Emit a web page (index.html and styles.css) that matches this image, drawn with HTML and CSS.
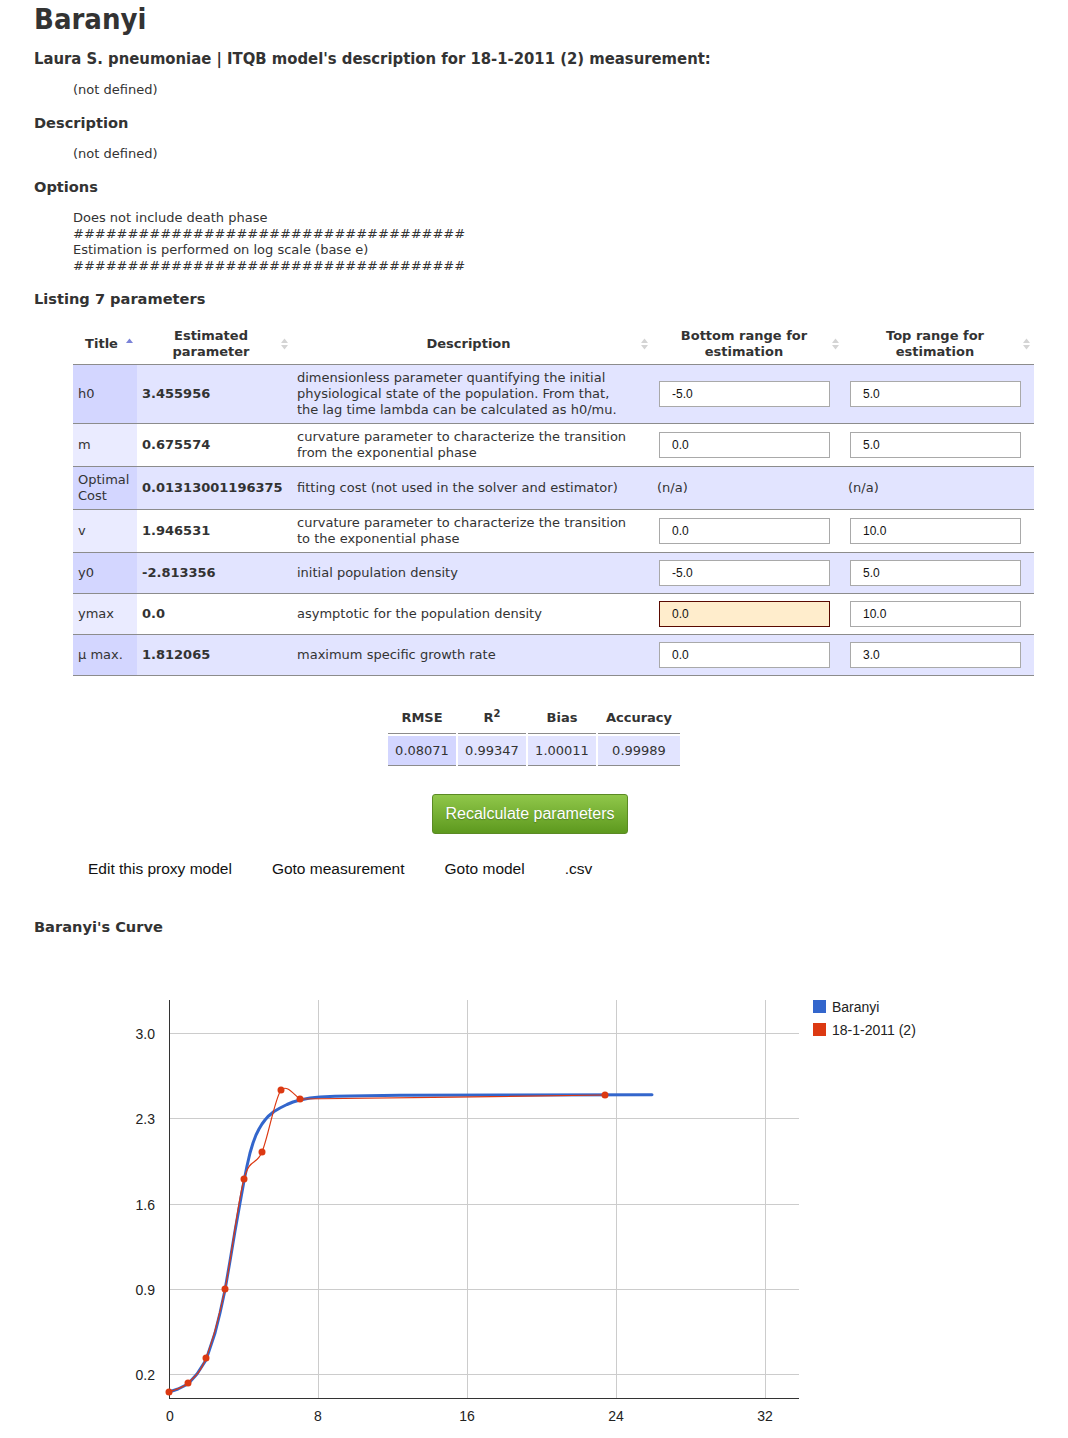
FILE: index.html
```html
<!DOCTYPE html>
<html>
<head>
<meta charset="utf-8">
<title>Baranyi</title>
<link rel="stylesheet" href="styles.css">
</head>
<body>
<div class="page">
  <h1 class="title">Baranyi</h1>
  <h2 class="subtitle">Laura S. pneumoniae | ITQB model's description for 18-1-2011 (2) measurement:</h2>
  <p class="indent">(not defined)</p>
  <h3 class="section">Description</h3>
  <p class="indent">(not defined)</p>
  <h3 class="section">Options</h3>
  <p class="indent">Does not include death phase<br>####################################<br>Estimation is performed on log scale (base e)<br>####################################</p>
  <h3 class="section">Listing 7 parameters</h3>

  <table class="params">
    <colgroup>
      <col class="c-title"><col class="c-est"><col class="c-desc"><col class="c-bot"><col class="c-top">
    </colgroup>
    <thead>
      <tr>
        <th><div class="th-in"><span class="th-label">Title</span><svg class="sort" width="7" height="12" viewBox="0 0 7 12"><path d="M0 5 L3.5 0.5 L7 5 Z" fill="#7b83d8"/></svg></div></th>
        <th><div class="th-in"><span class="th-label">Estimated<br>parameter</span><svg class="sort" width="7" height="12" viewBox="0 0 7 12"><path d="M0 5 L3.5 0.5 L7 5 Z M0 7 L7 7 L3.5 11.5 Z" fill="#d4d4d4"/></svg></div></th>
        <th><div class="th-in"><span class="th-label">Description</span><svg class="sort" width="7" height="12" viewBox="0 0 7 12"><path d="M0 5 L3.5 0.5 L7 5 Z M0 7 L7 7 L3.5 11.5 Z" fill="#d4d4d4"/></svg></div></th>
        <th><div class="th-in"><span class="th-label">Bottom range for<br>estimation</span><svg class="sort" width="7" height="12" viewBox="0 0 7 12"><path d="M0 5 L3.5 0.5 L7 5 Z M0 7 L7 7 L3.5 11.5 Z" fill="#d4d4d4"/></svg></div></th>
        <th><div class="th-in"><span class="th-label">Top range for<br>estimation</span><svg class="sort" width="7" height="12" viewBox="0 0 7 12"><path d="M0 5 L3.5 0.5 L7 5 Z M0 7 L7 7 L3.5 11.5 Z" fill="#d4d4d4"/></svg></div></th>
      </tr>
    </thead>
    <tbody>
      <tr class="odd">
        <td class="key">h0</td>
        <td class="val">3.455956</td>
        <td class="desc">dimensionless parameter quantifying the initial physiological state of the population. From that, the lag time lambda can be calculated as h0/mu.</td>
        <td><input class="rng" type="text" value="-5.0"></td>
        <td><input class="rng" type="text" value="5.0"></td>
      </tr>
      <tr class="even">
        <td class="key">m</td>
        <td class="val">0.675574</td>
        <td class="desc">curvature parameter to characterize the transition from the exponential phase</td>
        <td><input class="rng" type="text" value="0.0"></td>
        <td><input class="rng" type="text" value="5.0"></td>
      </tr>
      <tr class="odd">
        <td class="key">Optimal Cost</td>
        <td class="val">0.01313001196375</td>
        <td class="desc">fitting cost (not used in the solver and estimator)</td>
        <td>(n/a)</td>
        <td>(n/a)</td>
      </tr>
      <tr class="even">
        <td class="key">v</td>
        <td class="val">1.946531</td>
        <td class="desc">curvature parameter to characterize the transition to the exponential phase</td>
        <td><input class="rng" type="text" value="0.0"></td>
        <td><input class="rng" type="text" value="10.0"></td>
      </tr>
      <tr class="odd">
        <td class="key">y0</td>
        <td class="val">-2.813356</td>
        <td class="desc">initial population density</td>
        <td><input class="rng" type="text" value="-5.0"></td>
        <td><input class="rng" type="text" value="5.0"></td>
      </tr>
      <tr class="even">
        <td class="key">ymax</td>
        <td class="val">0.0</td>
        <td class="desc">asymptotic for the population density</td>
        <td><input class="rng rng-warn" type="text" value="0.0"></td>
        <td><input class="rng" type="text" value="10.0"></td>
      </tr>
      <tr class="odd">
        <td class="key">μ max.</td>
        <td class="val">1.812065</td>
        <td class="desc">maximum specific growth rate</td>
        <td><input class="rng" type="text" value="0.0"></td>
        <td><input class="rng" type="text" value="3.0"></td>
      </tr>
    </tbody>
  </table>

  <table class="stats">
    <thead>
      <tr><th class="s1">RMSE</th><th class="s2">R<sup>2</sup></th><th class="s3">Bias</th><th class="s4">Accuracy</th></tr>
    </thead>
    <tbody>
      <tr><td class="key">0.08071</td><td>0.99347</td><td>1.00011</td><td>0.99989</td></tr>
    </tbody>
  </table>

  <div class="btn-row"><button class="btn" type="button">Recalculate parameters</button></div>

  <div class="links">
    <a href="#">Edit this proxy model</a>
    <a href="#">Goto measurement</a>
    <a href="#">Goto model</a>
    <a href="#">.csv</a>
  </div>

  <h3 class="section curve-title">Baranyi's Curve</h3>

  <svg class="chart" width="1034" height="478" viewBox="0 0 1034 478">
    <g transform="translate(-34,-960)">
      <g stroke="#cccccc" stroke-width="1">
        <line x1="169" y1="1033.5" x2="799" y2="1033.5"/>
        <line x1="169" y1="1118.5" x2="799" y2="1118.5"/>
        <line x1="169" y1="1204.5" x2="799" y2="1204.5"/>
        <line x1="169" y1="1289.5" x2="799" y2="1289.5"/>
        <line x1="169" y1="1374.5" x2="799" y2="1374.5"/>
        <line x1="318.5" y1="1000" x2="318.5" y2="1398"/>
        <line x1="467.5" y1="1000" x2="467.5" y2="1398"/>
        <line x1="616.5" y1="1000" x2="616.5" y2="1398"/>
        <line x1="765.5" y1="1000" x2="765.5" y2="1398"/>
      </g>
      <g stroke="#333333" stroke-width="1">
        <line x1="169.5" y1="1000" x2="169.5" y2="1399"/>
        <line x1="169" y1="1398.5" x2="799" y2="1398.5"/>
      </g>
      <g class="axis-label" text-anchor="end">
        <text x="155" y="1039">3.0</text>
        <text x="155" y="1124">2.3</text>
        <text x="155" y="1210">1.6</text>
        <text x="155" y="1295">0.9</text>
        <text x="155" y="1380">0.2</text>
      </g>
      <g class="axis-label" text-anchor="middle">
        <text x="170" y="1421">0</text>
        <text x="318" y="1421">8</text>
        <text x="467" y="1421">16</text>
        <text x="616" y="1421">24</text>
        <text x="765" y="1421">32</text>
      </g>
      <polyline points="169,1392 178,1389 188,1384 197,1374 206,1360 215,1333 220,1313 225,1290 230,1261 235,1231 240,1203 244,1181 247,1166 250,1153 253,1143 256,1135 259,1129 262,1124 265,1120 268,1116.5 271,1114 274,1111.5 280,1108 287,1104.5 293,1102 300,1100 310,1098 320,1097 335,1096.3 350,1095.9 400,1095.3 500,1095 652,1094.8" fill="none" stroke="#3366cc" stroke-width="3" stroke-linecap="round" stroke-linejoin="round"/>
      <path d="M169 1392 C172.2 1390.5 181.8 1388.7 188 1383 C194.2 1377.3 199.8 1373.7 206 1358 C212.2 1342.3 218.7 1318.8 225 1289 C231.3 1259.2 237.8 1201.8 244 1179 C250.2 1156.2 255.8 1166.8 262 1152 C268.2 1137.2 274.7 1098.8 281 1090 C287 1084 294 1095 300 1099 C330 1099 560 1095.5 605 1095" fill="none" stroke="#dc3912" stroke-width="1.2"/>
      <g fill="#dc3912">
        <circle cx="169" cy="1392" r="3.5"/>
        <circle cx="188" cy="1383" r="3.5"/>
        <circle cx="206" cy="1358" r="3.5"/>
        <circle cx="225" cy="1289" r="3.5"/>
        <circle cx="244" cy="1179" r="3.5"/>
        <circle cx="262" cy="1152" r="3.5"/>
        <circle cx="281" cy="1090" r="3.5"/>
        <circle cx="300" cy="1099" r="3.5"/>
        <circle cx="605" cy="1095" r="3.5"/>
      </g>
      <rect x="813" y="1000" width="13" height="13" fill="#3366cc"/>
      <text class="legend" x="832" y="1012">Baranyi</text>
      <rect x="813" y="1023" width="13" height="13" fill="#dc3912"/>
      <text class="legend" x="832" y="1035">18-1-2011 (2)</text>
    </g>
  </svg>
</div>
</body>
</html>
```

FILE: styles.css
```css
html, body {
  margin: 0;
  padding: 0;
  background: #ffffff;
}

body {
  font-family: "DejaVu Sans", Verdana, sans-serif;
  font-size: 13px;
  line-height: 16px;
  color: #333333;
}

.page {
  padding: 0 34px;
}

.title {
  margin: 2px 0 0;
  font-family: "DejaVu Sans Condensed", "DejaVu Sans", sans-serif;
  font-weight: bold;
  font-size: 29px;
  line-height: 34px;
  color: #333333;
}

.subtitle {
  margin: 13px 0 0;
  font-family: "DejaVu Sans Condensed", "DejaVu Sans", sans-serif;
  font-weight: bold;
  font-size: 16.5px;
  line-height: 20px;
  color: #333333;
}

.section {
  margin: 15px 0 0;
  font-weight: bold;
  font-size: 14.6px;
  line-height: 20px;
  color: #333333;
}

.indent {
  margin: 13px 0 0 39px;
}

/* parameters table */
.params {
  margin: 15px 0 0 39px;
  width: 961px;
  table-layout: fixed;
  border-collapse: collapse;
}

.c-title { width: 64px; }
.c-est { width: 155px; }
.c-desc { width: 360px; }
.c-bot { width: 191px; }
.c-top { width: 191px; }

.params th {
  padding: 4px 4px 4px 6px;
  border-bottom: 1px solid #8c8c8c;
  font-weight: bold;
  color: #333333;
}

.th-in {
  display: flex;
  align-items: center;
}

.th-label {
  flex: 1;
  text-align: center;
}

.sort {
  flex: none;
  margin-left: 2px;
}

.params td {
  padding: 5px;
  border-bottom: 1px solid #8c8c8c;
  vertical-align: middle;
}

.params td.desc {
  padding-right: 22px;
}

.params tr.odd td { background: #e2e4ff; }
.params tr.odd td.key { background: #d3d6ff; }
.params tr.even td { background: #ffffff; }
.params tr.even td.key { background: #eaebff; }

.params td.val {
  font-weight: bold;
}

.rng {
  display: block;
  box-sizing: border-box;
  width: 171px;
  height: 26px;
  margin: 2px 0 2px 2px;
  padding: 0 12px;
  border: 1px solid #a9a9a9;
  background: #ffffff;
  font-family: "Liberation Sans", Arial, sans-serif;
  font-size: 12px;
  color: #111111;
}

.rng-warn {
  background: #ffedcc;
  border-color: #5a0a00;
}

/* stats table */
.stats {
  margin: 26px auto 0;
  border-collapse: separate;
  border-spacing: 2px;
}

.stats th {
  padding: 6px 4px 7px;
  border-bottom: 1px solid #8c8c8c;
  font-weight: bold;
  text-align: center;
}

.stats th.s1, .stats th.s2, .stats th.s3 { width: 60px; }
.stats th.s4 { width: 74px; }

.stats sup {
  font-size: 10px;
  line-height: 0;
}

.stats td {
  padding: 7px 4px 6px;
  text-align: center;
  background: #e2e4ff;
  border-bottom: 1px solid #8c8c8c;
}

.stats td.key {
  background: #d3d6ff;
}

/* button */
.btn-row {
  display: flex;
  justify-content: center;
  margin-top: 26px;
  padding-right: 8px;
}

.btn {
  width: 196px;
  height: 40px;
  border: 1px solid #5b8a24;
  border-radius: 3px;
  background: linear-gradient(#90c74a, #5d991e);
  color: #ffffff;
  font-family: "Liberation Sans", Arial, sans-serif;
  font-size: 16px;
  text-shadow: 0 1px 1px rgba(0, 0, 0, 0.25);
  padding: 0;
}

/* links */
.links {
  display: flex;
  gap: 40px;
  margin-top: 26px;
  padding-left: 54px;
}

.links a {
  font-family: "Liberation Sans", Arial, sans-serif;
  font-size: 15.5px;
  line-height: 18px;
  color: #111111;
  text-decoration: none;
}

.curve-title {
  margin-top: 39px;
}

/* chart */
.chart {
  display: block;
  margin-top: 23px;
}

.axis-label {
  font-family: "Liberation Sans", Arial, sans-serif;
  font-size: 14px;
  fill: #222222;
}

.legend {
  font-family: "Liberation Sans", Arial, sans-serif;
  font-size: 14px;
  fill: #222222;
}
```
